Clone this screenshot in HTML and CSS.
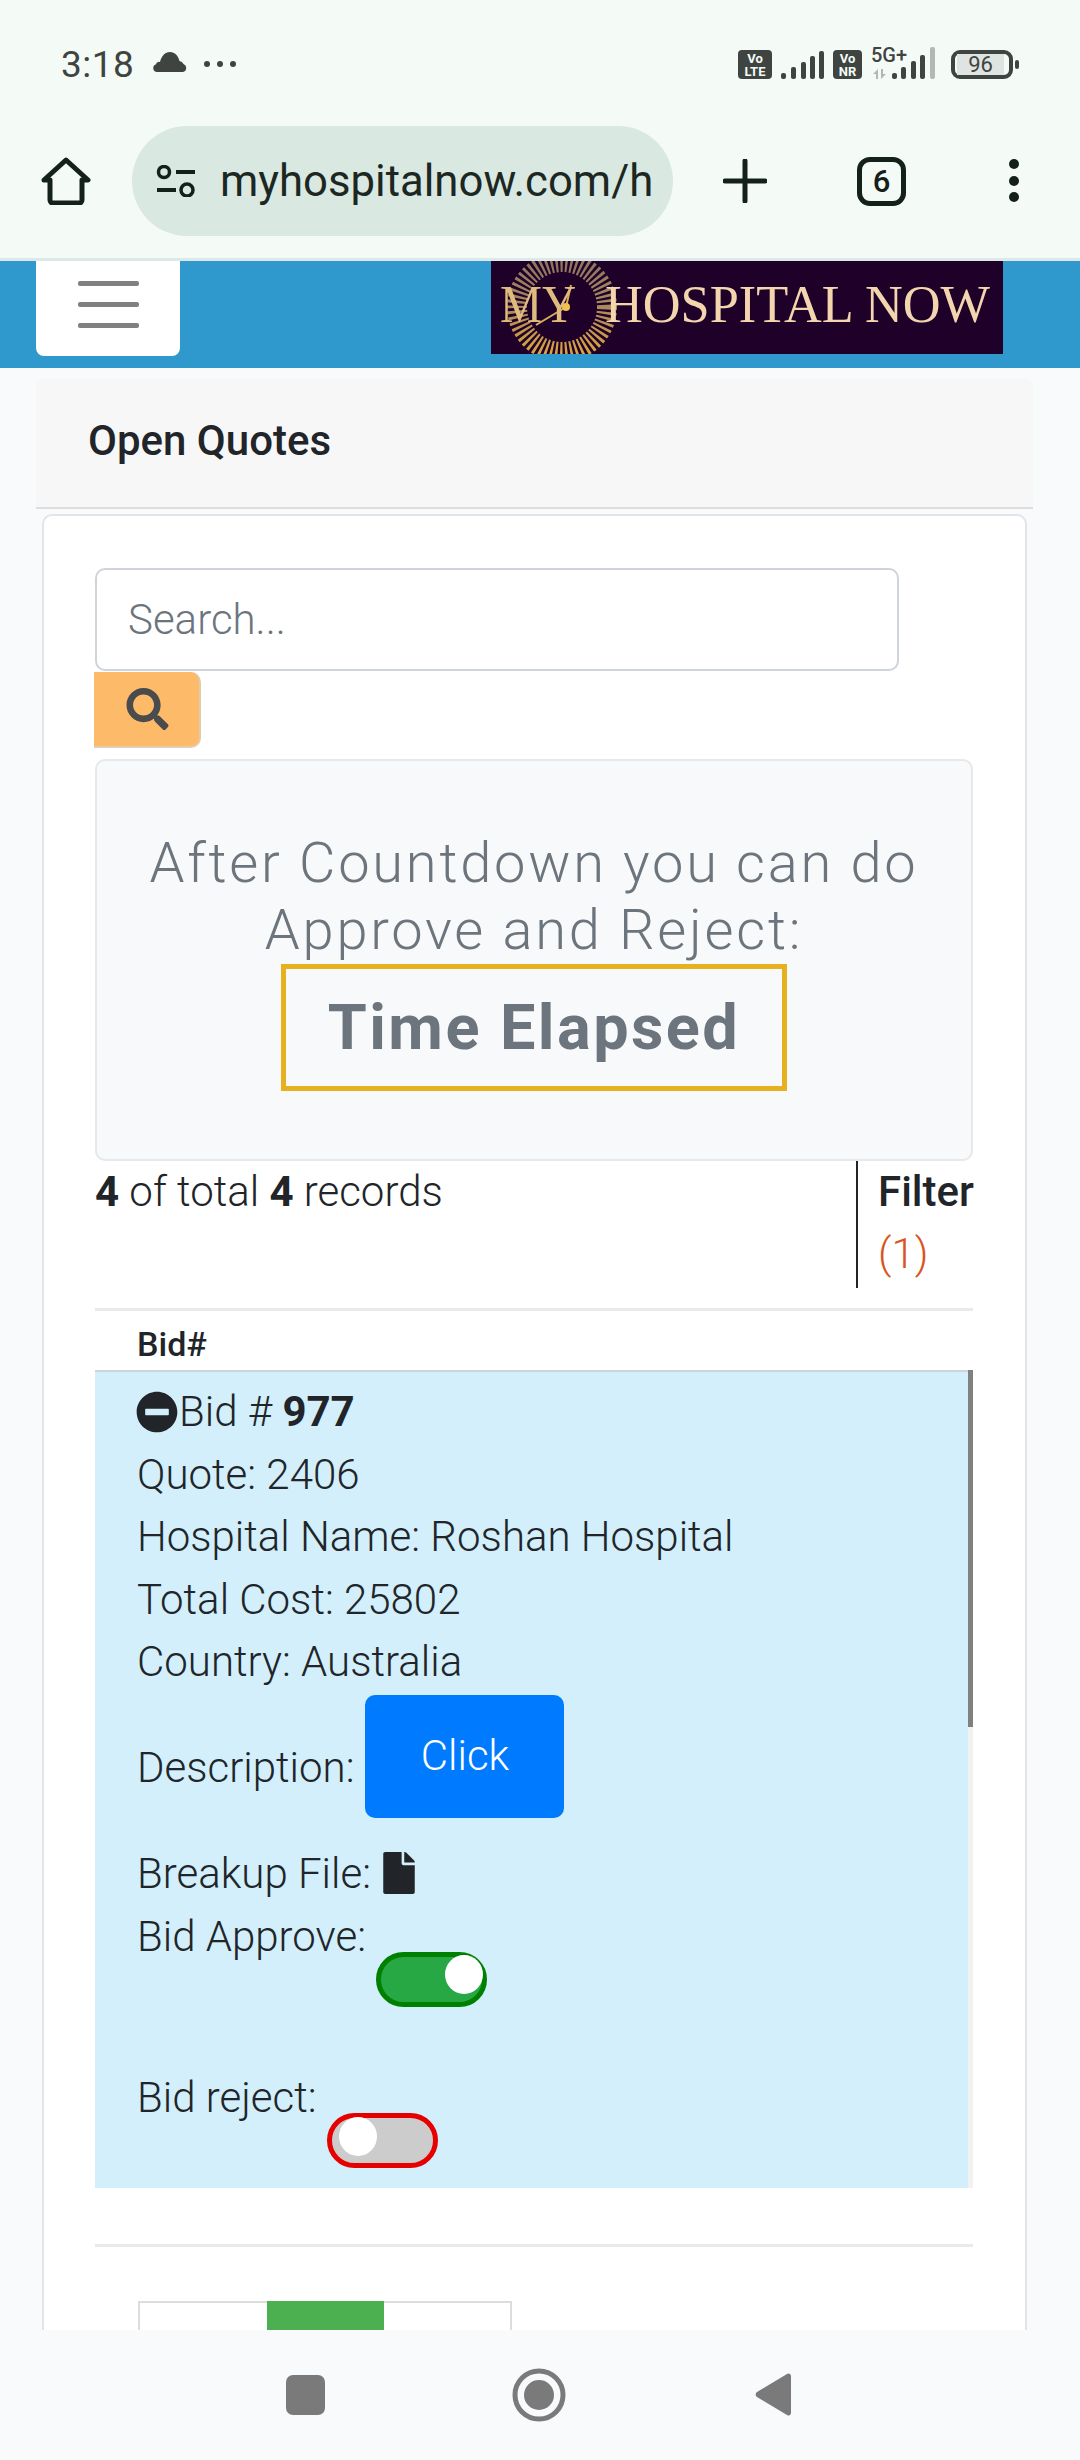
FILE: index.html
```html
<!DOCTYPE html>
<html lang="en">
<head>
<meta charset="utf-8">
<title>Open Quotes</title>
<link rel="stylesheet" href="styles.css">
</head>
<body>
<div class="screen">
  <header class="chrome">
    <div class="status">
      <div class="status-left">
        <span class="time">3:18</span>
        <svg class="cloud" viewBox="0 0 34 20"><path d="M4 20a4 4 0 0 1-1-7.800 3 3 0 0 1 4-2.200C8.500 4 12 0 17 0s8 3.500 9.500 9a5.500 5.500 0 0 1 4 3A4.200 4.200 0 0 1 30 20z"/></svg>
        <svg class="dots" viewBox="0 0 32 6"><circle cx="3" cy="3" r="3"/><circle cx="16" cy="3" r="3"/><circle cx="29" cy="3" r="3"/></svg>
      </div>
      <div class="status-right">
        <span class="vo vo-wide">Vo<br>LTE</span>
        <svg class="bars" viewBox="0 0 44 28"><rect x="0" y="22" width="5" height="6" rx="2"/><rect x="10" y="16" width="5" height="12" rx="2"/><rect x="20" y="11" width="5" height="17" rx="2"/><rect x="29" y="5" width="5" height="23" rx="2"/><rect x="38" y="0" width="5" height="28" rx="2"/></svg>
        <span class="vo vo-narrow">Vo<br>NR</span>
        <div class="net">
          <span class="fiveg">5G+</span>
          <svg class="bars5" viewBox="0 0 65 32"><path class="dim" d="M2 27l5-5v10H5v-5zM10 22h2v5h3l-5 5z"/><rect x="21" y="26" width="5" height="6" rx="2"/><rect x="30" y="20" width="5" height="12" rx="2"/><rect x="40" y="14" width="5" height="18" rx="2"/><rect x="49" y="8" width="5" height="24" rx="2"/><rect class="dim" x="59" y="0" width="5" height="32" rx="2"/></svg>
        </div>
        <div class="battery"><span class="battery-fill">96</span></div>
        <span class="battery-nub"></span>
      </div>
    </div>
    <div class="toolbar">
      <svg class="home" viewBox="0 0 50 48"><path d="M3 23L25 3l22 20h-6v20a3 3 0 0 1-3 3H12a3 3 0 0 1-3-3V23z" fill="none" stroke="#14201a" stroke-width="5" stroke-linejoin="round"/></svg>
      <div class="url">
        <svg class="tune" viewBox="0 0 40 32"><circle cx="8" cy="7" r="5.500" fill="none" stroke="#14201a" stroke-width="3.500"/><rect x="20" y="5" width="19" height="4"/><rect x="1" y="23" width="19" height="4"/><circle cx="31" cy="25" r="6" fill="none" stroke="#14201a" stroke-width="3.500"/></svg>
        <span class="url-text">myhospitalnow.com/h</span>
      </div>
      <svg class="plus" viewBox="0 0 44 44"><path d="M22 2v40M2 22h40" stroke="#14201a" stroke-width="5" stroke-linecap="round"/></svg>
      <div class="tabs">6</div>
      <svg class="kebab" viewBox="0 0 10 44"><circle cx="5" cy="5" r="5"/><circle cx="5" cy="22" r="5"/><circle cx="5" cy="38" r="5"/></svg>
    </div>
  </header>

  <nav class="navbar">
    <button class="burger" type="button"><span></span><span></span><span></span></button>
    <svg class="logo" viewBox="0 0 512 93">
      <defs>
        <linearGradient id="burst" x1="0" y1="0" x2="0" y2="1">
          <stop offset="0" stop-color="#8f7560"/>
          <stop offset="0.5" stop-color="#a98a5e"/>
          <stop offset="1" stop-color="#d8a23e"/>
        </linearGradient>
      </defs>
      <rect width="512" height="93" fill="#1e0029"/>
      <circle cx="71" cy="46" r="45" fill="none" stroke="url(#burst)" stroke-width="20" stroke-dasharray="2.500 2.500"/>
      <path d="M75 46l-30 18M75 46l5-22" stroke="#d9ad5c" stroke-width="2"/>
      <circle cx="75" cy="46" r="4" fill="#f2c14e"/>
      <text class="logo-my" x="9" y="61" textLength="76" lengthAdjust="spacingAndGlyphs">MY</text>
      <text class="logo-name" x="114" y="61" textLength="385" lengthAdjust="spacingAndGlyphs">HOSPITAL NOW</text>
    </svg>
  </nav>

  <main class="page">
    <div class="card-header">Open Quotes</div>
    <section class="card">
      <div class="search-input">Search...</div>
      <button class="search-btn" type="button"><svg viewBox="0 0 512 512"><path d="M505 442.700L405.300 343c-4.500-4.500-10.600-7-17-7H372c27.600-35.300 44-79.700 44-128C416 93.100 322.900 0 208 0S0 93.100 0 208s93.100 208 208 208c48.300 0 92.700-16.400 128-44v16.300c0 6.400 2.500 12.500 7 17l99.700 99.700c9.400 9.400 24.600 9.400 33.900 0l28.300-28.300c9.400-9.400 9.400-24.600.1-34zM208 336c-70.700 0-128-57.200-128-128 0-70.700 57.200-128 128-128 70.700 0 128 57.200 128 128 0 70.700-57.200 128-128 128z"/></svg></button>

      <div class="jumbo">
        <p class="jumbo-text">After Countdown you can do<br>Approve and Reject:</p>
        <div class="elapsed">Time Elapsed</div>
      </div>

      <div class="records">
        <div class="records-count"><b>4</b> of total <b>4</b> records</div>
        <div class="filter"><b>Filter</b><br><span class="filter-count">(1)</span></div>
      </div>

      <div class="rule rule-first"></div>
      <div class="col-head">Bid#</div>

      <div class="table-body">
        <div class="row-blue">
          <div class="line line-bid">
            <svg class="minus" viewBox="0 0 512 512"><path d="M256 8C119 8 8 119 8 256s111 248 248 248 248-111 248-248S393 8 256 8zM124 296c-6.600 0-12-5.400-12-12v-56c0-6.600 5.400-12 12-12h264c6.600 0 12 5.400 12 12v56c0 6.600-5.400 12-12 12H124z"/></svg>
            <span>Bid # <b>977</b></span>
          </div>
          <div class="line">Quote: 2406</div>
          <div class="line">Hospital Name: Roshan Hospital</div>
          <div class="line">Total Cost: 25802</div>
          <div class="line">Country: Australia</div>
          <div class="line line-desc"><span class="desc-label">Description:</span><button class="click" type="button">Click</button></div>
          <div class="line line-file">Breakup File:<svg class="file" viewBox="0 0 384 512"><path d="M224 136V0H24C10.700 0 0 10.700 0 24v464c0 13.300 10.700 24 24 24h336c13.300 0 24-10.700 24-24V160H248c-13.200 0-24-10.800-24-24zm160-14.100v6.100H256V0h6.100c6.400 0 12.500 2.500 17 7l97.900 98c4.500 4.500 7 10.600 7 16.900z"/></svg></div>
          <div class="line line-toggle">Bid Approve:<span class="toggle toggle-on"><span class="knob"></span></span></div>
          <div class="line line-toggle line-last">Bid reject:<span class="toggle toggle-off"><span class="knob"></span></span></div>
        </div>
        <div class="scrollbar"><div class="thumb"></div></div>
      </div>

      <div class="rule rule-second"></div>

      <div class="mini-table"><span class="mini-cell"></span><span class="mini-green"></span><span class="mini-cell"></span></div>
    </section>
  </main>

  <footer class="sysnav">
    <span class="sys-square"></span>
    <svg class="sys-circle" viewBox="0 0 54 54"><circle cx="27" cy="27" r="24" fill="none" stroke="#7a7a7a" stroke-width="5"/><circle cx="27" cy="27" r="15" fill="#7a7a7a"/></svg>
    <svg class="sys-back" viewBox="0 0 36 45"><path d="M32 2a2.500 2.500 0 0 1 4 2v37a2.500 2.500 0 0 1-4 2L2 25a3 3 0 0 1 0-5z" fill="#7a7a7a"/></svg>
  </footer>
</div>
</body>
</html>
```
FILE: styles.css
```css
* { box-sizing: border-box; }
html, body { margin: 0; padding: 0; }
body { font-family: Roboto, "Liberation Sans", sans-serif; color: #212529; background: #f8fafc; }
button { font-family: inherit; padding: 0; border: 0; }

.screen { width: 1080px; height: 2460px; display: flex; flex-direction: column; overflow: hidden; }

/* browser chrome */
.chrome { height: 261px; flex: none; background: #f4fbf7; border-bottom: 3px solid #dfe8e8; }
.status { height: 126px; padding: 50px 61px 0 61px; display: flex; justify-content: space-between; align-items: flex-start; color: #3f4441; }
.status-left { display: flex; align-items: center; height: 30px; }
.time { font-size: 37px; line-height: 30px; letter-spacing: .5px; }
.cloud { width: 34px; height: 20px; margin: -6px 0 0 19px; fill: #3f4441; }
.dots { width: 32px; height: 6px; margin: -2px 0 0 17px; fill: #3f4441; }
.status-right { display: flex; align-items: flex-start; }
.vo { display: block; background: #3f4441; color: #f4fbf7; font-weight: 700; font-size: 13px; line-height: 13px; text-align: center; border-radius: 4px; height: 29px; padding-top: 2px; }
.vo-wide { width: 34px; }
.vo-narrow { width: 29px; margin-left: 8px; }
.bars { width: 44px; height: 28px; margin: 1px 0 0 9px; fill: #3f4441; }
.net { width: 65px; margin: -3px 0 0 9px; display: flex; flex-direction: column; height: 32px; }
.fiveg { font-size: 20px; line-height: 16px; font-weight: 500; }
.bars5 { width: 65px; height: 32px; fill: #3f4441; margin-top: -16px; }
.bars5 .dim { fill: #b3b8b5; }
.battery { width: 62px; height: 29px; border: 4px solid #3f4441; border-radius: 9px; margin: 0 0 0 15px; padding: 0 5px 0 2px; }
.battery-fill { display: block; height: 21px; background: #dfe3e1; font-size: 22px; line-height: 21px; text-align: center; }
.battery-nub { width: 4px; height: 9px; background: #3f4441; border-radius: 2px; margin: 10px 0 0 2px; }

.toolbar { height: 110px; display: flex; align-items: center; padding-left: 41px; }
.home { width: 50px; height: 48px; flex: none; }
.url { width: 541px; height: 110px; margin-left: 41px; background: #dae8e2; border-radius: 55px; display: flex; align-items: center; padding-left: 24px; flex: none; }
.tune { width: 40px; height: 32px; flex: none; fill: #14201a; }
.url-text { margin-left: 24px; white-space: nowrap; font-size: 43.700px; line-height: 52px; color: #1c2722; }
.plus { width: 44px; height: 44px; margin-left: 50px; flex: none; }
.tabs { width: 49px; height: 49px; margin-left: 90px; flex: none; border: 5px solid #14201a; border-radius: 13px; font-size: 31px; font-weight: 500; line-height: 39px; text-align: center; color: #14201a; }
.kebab { width: 10px; height: 44px; margin-left: 103px; flex: none; fill: #14201a; }

/* site navbar */
.navbar { flex: none; height: 107px; background: #2f98cd; display: flex; align-items: flex-start; padding-left: 36px; }
.burger { width: 144px; height: 95px; background: #fff; border-radius: 0 0 8px 8px; display: flex; flex-direction: column; align-items: center; padding-top: 20px; gap: 16px; }
.burger span { width: 61px; height: 5px; border-radius: 2px; background: #808080; }
.logo { width: 512px; height: 93px; margin-left: 311px; }
.logo-my { font-family: "Liberation Serif", serif; font-size: 52px; fill: #e0bb7e; }
.logo-name { font-family: "Liberation Serif", serif; font-size: 52px; fill: #f3d6ae; }

/* page */
.page { flex: 1; min-height: 0; overflow: hidden; padding: 10px 47px 0 36px; }
.card-header { height: 131px; background: #f7f7f7; border-bottom: 2px solid #dcdee0; padding: 39px 0 0 52px; font-size: 42px; line-height: 48px; font-weight: 500; border-radius: 8px 8px 0 0; }
.card { margin: 5px 6px 0; background: #fff; border: 2px solid #e2e5e8; border-radius: 10px; padding: 52px 51px 0 51px; }
.search-input { width: 804px; height: 103px; border: 2px solid #ced4da; border-radius: 10px; padding: 0 31px; font-size: 42px; line-height: 99px; color: #6c757d; font-weight: 300; }
.search-btn { display: block; width: 107px; height: 76px; margin: 1px 0 0 -1px; background: #fdba68; border-radius: 0 10px 10px 0; border-bottom: 2px solid #e0cfb8; border-right: 2px solid #e4cba8; }
.search-btn svg { display: block; width: 43px; height: 42px; margin: 0 0 0 32px; fill: #494b4d; }

.jumbo { width: 878px; height: 402px; margin-top: 11px; background: #f8f9fa; border: 2px solid #e6e8ea; border-radius: 10px; padding-top: 69px; text-align: center; color: #6c757d; }
.jumbo-text { margin: 0; font-size: 56px; line-height: 67px; font-weight: 300; letter-spacing: 2.750px; }
.elapsed { width: 506px; height: 127px; margin: 0 auto; border: 5px solid #e6b01e; font-size: 63px; font-weight: 700; line-height: 117px; letter-spacing: 2.450px; }

.records { width: 878px; height: 127px; display: flex; justify-content: space-between; font-size: 42px; line-height: 62px; }
.records-count { font-weight: 300; }
.records-count b { font-weight: 700; }
.filter b { font-weight: 500; }
.filter { width: 117px; border-left: 2px solid #212529; padding-left: 20px; white-space: nowrap; }
.filter-count { color: #d9531e; font-weight: 300; }

.rule { width: 878px; height: 3px; background: #e8eaec; }
.rule-first { margin-top: 20px; }
.rule-second { margin-top: 56px; }
.col-head { height: 59px; padding: 13px 0 0 42px; font-size: 34px; line-height: 40px; font-weight: 500; }

.table-body { width: 878px; display: flex; }
.row-blue { width: 873px; background: #d2effb; border-top: 2px solid #cdd5d9; padding: 9px 0 0 42px; font-size: 42px; line-height: 62.500px; font-weight: 300; color: #212529; }
.line b { font-weight: 700; }
.line-bid { display: flex; align-items: center; }
.minus { width: 42px; height: 42px; fill: #212529; margin: 0 1px 0 -1px; flex: none; }
.line-desc { display: flex; align-items: flex-start; height: 149.500px; }
.desc-label { margin-top: 43px; }
.click { width: 199px; height: 123px; margin: 1px 0 0 11px; background: #007bff; color: #fff; font-size: 42px; font-weight: 300; line-height: 112px; border-radius: 10px; padding: 0; }
.line-file { display: flex; align-items: flex-start; }
.file { width: 36px; height: 42px; margin: 9px 0 0 10px; fill: #212529; }
.line-toggle { display: flex; align-items: flex-start; height: 161px; }
.line-last { height: 121.500px; }
.toggle { width: 111px; height: 55px; margin: 46px 0 0 10px; border-radius: 28px; border: 5px solid; display: flex; }
.toggle-on { background: #28a745; border-color: #008000; justify-content: flex-end; }
.toggle-off { background: #ccc; border-color: #e60000; }
.knob { width: 38px; height: 39px; border-radius: 50%; background: #fff; margin-top: -2px; }
.toggle-off .knob { margin-left: 7px; margin-top: -1px; }
.toggle-on .knob { margin-right: -1px; }

.scrollbar { width: 5px; background: #f1f1f1; }
.thumb { height: 357px; background: #808080; }

.mini-table { width: 374px; height: 60px; margin: 54px 0 0 43px; border: 2px solid #ddd; display: flex; }
.mini-cell { flex: none; width: 127px; }
.mini-green { flex: none; width: 117px; height: 60px; margin-top: -2px; background: #4caf50; }
.mini-cell:last-child { width: 126px; }

/* system nav */
.sysnav { flex: none; height: 130px; background: #f8fafc; display: flex; align-items: flex-start; padding: 38px 0 0 286px; }
.sys-square { width: 39px; height: 40px; margin-top: 7px; background: #7a7a7a; border-radius: 7px; }
.sys-circle { width: 54px; height: 54px; margin: 0 0 0 187px; }
.sys-back { width: 36px; height: 45px; margin: 4px 0 0 189px; }
```
